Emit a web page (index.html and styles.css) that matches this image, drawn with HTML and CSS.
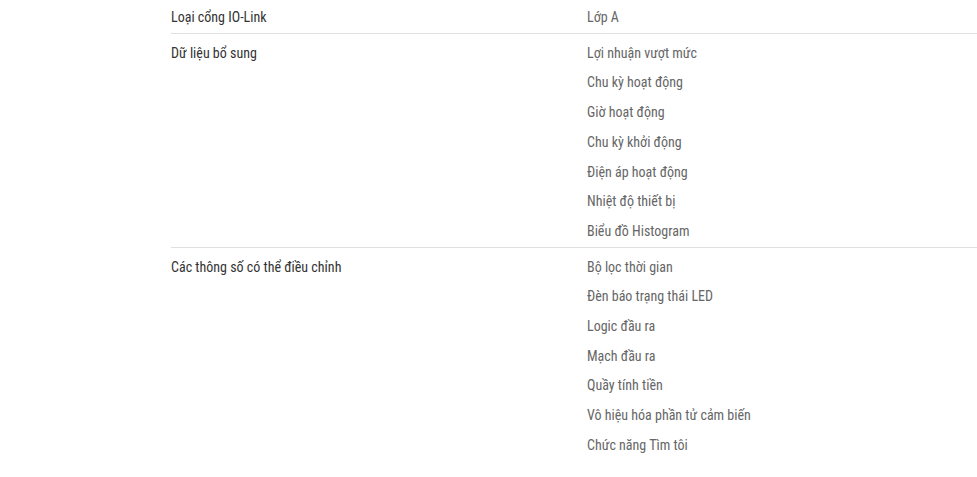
FILE: index.html
```html
<!DOCTYPE html>
<html lang="vi">
<head>
    <meta charset="UTF-8">
    <meta name="viewport" content="width=device-width, initial-scale=1.0">
    <title>Thông số kỹ thuật</title>
    <link rel="stylesheet" href="styles.css">
</head>
<body>
    <div class="specs">
        <div class="spec-row first">
            <div class="spec-label">Loại cổng IO-Link</div>
            <ul class="spec-values">
                <li>Lớp A</li>
            </ul>
        </div>
        <div class="spec-row">
            <div class="spec-label">Dữ liệu bổ sung</div>
            <ul class="spec-values">
                <li>Lợi nhuận vượt mức</li>
                <li>Chu kỳ hoạt động</li>
                <li>Giờ hoạt động</li>
                <li>Chu kỳ khởi động</li>
                <li>Điện áp hoạt động</li>
                <li>Nhiệt độ thiết bị</li>
                <li>Biểu đồ Histogram</li>
            </ul>
        </div>
        <div class="spec-row last">
            <div class="spec-label">Các thông số có thể điều chỉnh</div>
            <ul class="spec-values">
                <li>Bộ lọc thời gian</li>
                <li>Đèn báo trạng thái LED</li>
                <li>Logic đầu ra</li>
                <li>Mạch đầu ra</li>
                <li>Quầy tính tiền</li>
                <li>Vô hiệu hóa phần tử cảm biến</li>
                <li>Chức năng Tìm tôi</li>
            </ul>
        </div>
    </div>
</body>
</html>
```

FILE: styles.css
```css
body {
    margin: 0;
    background: #fff;
    font-family: "Roboto Condensed", Roboto, "Liberation Sans", sans-serif;
    font-size: 14px;
}
.specs {
    margin-left: 171px;
}
.spec-row {
    display: flex;
    border-bottom: 1px solid #e0e0e0;
    padding-top: 5px;
}
.spec-row.first {
    padding-top: 3px;
}
.spec-row.last {
    border-bottom: none;
}
.spec-label {
    width: 416px;
    flex-shrink: 0;
    line-height: 29.7px;
    color: #333;
}
.spec-values {
    list-style: none;
    margin: 0;
    padding: 0;
    flex: 1;
}
.spec-values li {
    line-height: 29.7px;
    color: #666;
}
```
